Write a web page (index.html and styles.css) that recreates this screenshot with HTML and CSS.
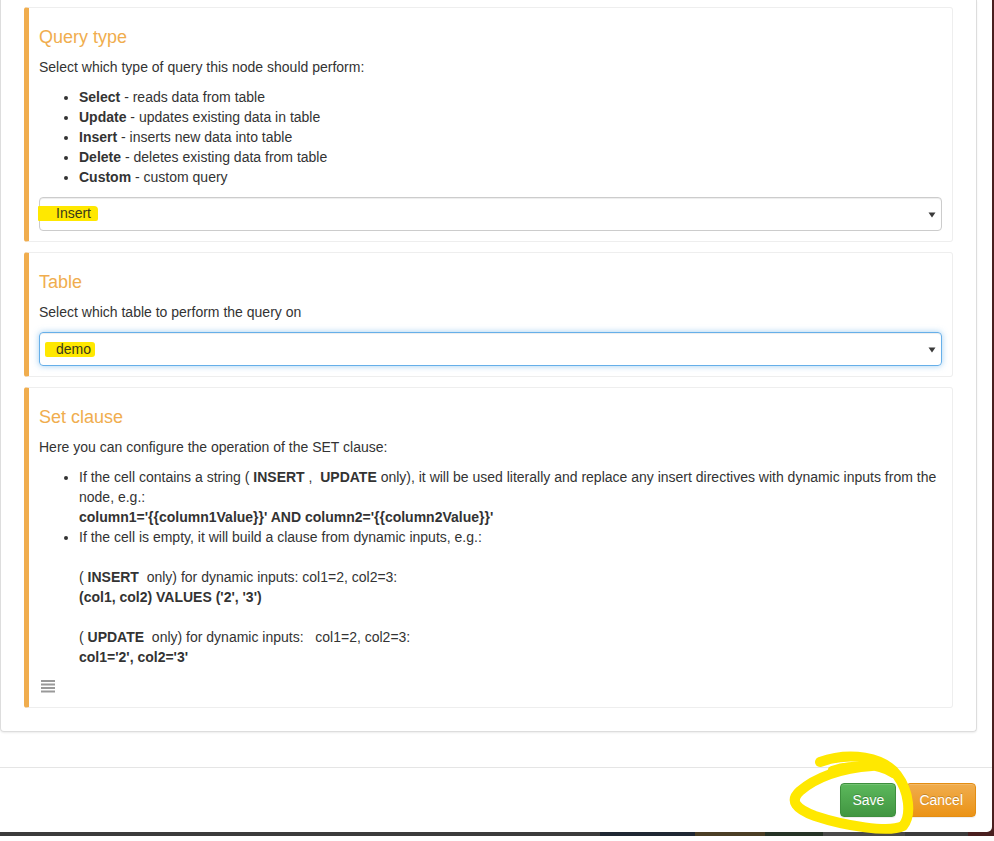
FILE: index.html
```html
<!DOCTYPE html>
<html>
<head>
<meta charset="utf-8">
<title>Query node</title>
<link rel="stylesheet" href="styles.css">
</head>
<body>
<div class="screen">
  <div class="modal">
    <div class="modal-body">
      <div class="panel">
        <div class="card">
          <h4 class="card-title">Query type</h4>
          <p>Select which type of query this node should perform:</p>
          <ul>
            <li><b>Select</b> - reads data from table</li>
            <li><b>Update</b> - updates existing data in table</li>
            <li><b>Insert</b> - inserts new data into table</li>
            <li><b>Delete</b> - deletes existing data from table</li>
            <li><b>Custom</b> - custom query</li>
          </ul>
          <div class="select">
            <span class="value"><span class="hl hl-1">Insert</span></span>
            <svg class="caret" width="8" height="6" viewBox="0 0 8 6"><path d="M0.5 0.5 H7.5 L4 5.5 Z" fill="#3a3a3a"/></svg>
          </div>
        </div>
        <div class="card">
          <h4 class="card-title">Table</h4>
          <p>Select which table to perform the query on</p>
          <div class="select focus">
            <span class="value"><span class="hl hl-2">demo</span></span>
            <svg class="caret" width="8" height="6" viewBox="0 0 8 6"><path d="M0.5 0.5 H7.5 L4 5.5 Z" fill="#3a3a3a"/></svg>
          </div>
        </div>
        <div class="card">
          <h4 class="card-title">Set clause</h4>
          <p>Here you can configure the operation of the SET clause:</p>
          <ul>
            <li>If the cell contains a string ( <b>INSERT</b> ,&nbsp; <b>UPDATE</b> only), it will be used literally and replace any insert directives with dynamic inputs from the node, e.g.:<br><b>column1='{{column1Value}}' AND column2='{{column2Value}}'</b></li>
            <li>If the cell is empty, it will build a clause from dynamic inputs, e.g.:<br><br>( <b>INSERT</b>&nbsp; only) for dynamic inputs: col1=2, col2=3:<br><b>(col1, col2) VALUES ('2', '3')</b><br><br>( <b>UPDATE</b>&nbsp; only) for dynamic inputs: &nbsp; col1=2, col2=3:<br><b>col1='2', col2='3'</b></li>
          </ul>
          <div class="handle">
            <svg width="14" height="13" viewBox="0 0 14 13"><rect x="0" y="0" width="14" height="2" fill="#999"/><rect x="0" y="3.5" width="14" height="2" fill="#999"/><rect x="0" y="7" width="14" height="2" fill="#999"/><rect x="0" y="10.5" width="14" height="2" fill="#999"/></svg>
          </div>
        </div>
      </div>
    </div>
    <div class="modal-footer">
      <button class="btn btn-success">Save</button>
      <button class="btn btn-warning">Cancel</button>
    </div>
  </div>
  <svg class="annotation" width="994" height="841" viewBox="0 0 994 841">
    <path d="M820 762 C850 751, 884 757, 897 775 C909 791, 912 815, 903 826 C889 833, 845 826, 815 816 C796 809, 789 801, 800 791 C815 778, 840 768, 872 766" fill="none" stroke="#ffe800" stroke-width="10" stroke-linecap="round" stroke-linejoin="round"/>
    <path d="M832 770 C852 763, 878 764, 893 774" fill="none" stroke="#ffe800" stroke-width="8" stroke-linecap="round"/>
  </svg>
</div>
</body>
</html>
```
FILE: styles.css
```css
html, body {
  margin: 0;
  padding: 0;
  background: #ffffff;
}

body {
  font-family: "Liberation Sans", Arial, sans-serif;
  font-size: 14px;
  line-height: 20px;
  color: #333333;
}

.screen {
  position: relative;
  width: 994px;
  padding: 0 2px 4px 0;
  box-sizing: border-box;
  background: linear-gradient(to right,
    #3c3c3c 0, #3c3c3c 600px,
    #1f2833 600px, #1f2833 695px,
    #4b3e25 695px, #4b3e25 765px,
    #263326 765px, #263326 823px,
    #4a4a4a 823px, #4a4a4a 905px,
    #3c3c3c 905px, #3c3c3c 968px,
    #4a2020 968px, #4a2020 994px);
}

.modal {
  width: 992px;
  background: #ffffff;
  border-bottom-right-radius: 5px;
  display: flex;
  flex-direction: column;
}

.modal-body {
  padding: 0 15px 35px 0;
}

.panel {
  border: 1px solid #dddddd;
  border-top: none;
  border-radius: 0 0 4px 4px;
  box-shadow: 0 1px 2px rgba(0, 0, 0, 0.08);
  padding: 7px 23px 23px 23px;
  display: flex;
  flex-direction: column;
  gap: 10px;
}

.card {
  border: 1px solid #eeeeee;
  border-left: 5px solid #f0ad4e;
  border-radius: 3px;
  padding: 9px 10px 10px 10px;
  background: #ffffff;
}

.card-title {
  margin: 10px 0;
  font-size: 18px;
  font-weight: normal;
  line-height: 20px;
  color: #f0ad4e;
}

.card p {
  margin: 0 0 10px 0;
}

.card ul {
  margin: 0 0 10px 0;
  padding-left: 40px;
}

.select {
  height: 34px;
  box-sizing: border-box;
  border: 1px solid #cccccc;
  border-radius: 4px;
  box-shadow: inset 0 1px 1px rgba(0, 0, 0, 0.075);
  display: flex;
  align-items: center;
  justify-content: space-between;
  padding: 0 5px 0 16px;
}

.select.focus {
  border-color: #66afe9;
  box-shadow: inset 0 1px 1px rgba(0, 0, 0, 0.075), 0 0 6px rgba(102, 175, 233, 0.6);
}

.select .value {
  display: flex;
  align-items: center;
}

.hl {
  display: inline-block;
  background: #ffe800;
  color: #3a3a1a;
  line-height: 15px;
}

.hl-1 {
  margin-left: -18px;
  padding: 0 7px 0 18px;
  position: relative;
  top: -1px;
  border-radius: 1px 4px 2px 1px;
}

.hl-2 {
  margin-left: -11px;
  padding: 0 4px 0 11px;
  border-radius: 2px 3px 3px 2px;
}

.caret {
  display: block;
  margin-top: 1px;
}

.handle {
  height: 20px;
  padding: 3px 0 0 2px;
  box-sizing: border-box;
}

.handle svg {
  display: block;
}

.modal-footer {
  border-top: 1px solid #e5e5e5;
  padding: 15px 16px 15px 15px;
  display: flex;
  justify-content: flex-end;
  gap: 10px;
}

.btn {
  font-family: "Liberation Sans", Arial, sans-serif;
  font-size: 14px;
  line-height: 20px;
  height: 34px;
  padding: 6px 12px;
  border-radius: 4px;
  color: #ffffff;
  text-shadow: 0 -1px 0 rgba(0, 0, 0, 0.2);
  cursor: pointer;
  box-shadow: inset 0 1px 0 rgba(255, 255, 255, 0.15), 0 1px 1px rgba(0, 0, 0, 0.075);
}

.btn-success {
  padding: 6px 11px;
  background: linear-gradient(#5cb85c, #419641);
  border: 1px solid #3e8f3e;
}

.btn-warning {
  background: linear-gradient(#f0ad4e, #eb9316);
  border: 1px solid #e38d13;
}

.annotation {
  position: absolute;
  left: 0;
  top: 0;
  pointer-events: none;
}
```
